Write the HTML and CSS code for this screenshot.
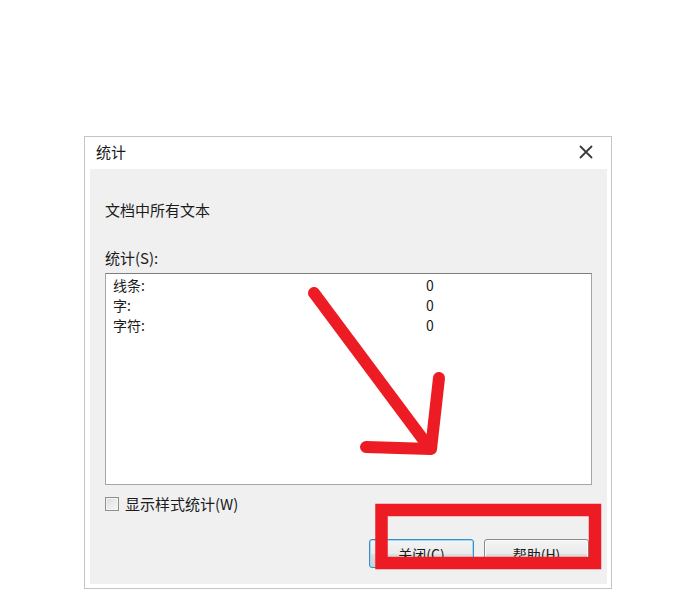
FILE: index.html
```html
<!DOCTYPE html>
<html lang="zh-CN">
<head>
  <meta charset="UTF-8" />
  <title>统计</title>
  <link rel="stylesheet" href="styles.css">
</head>
<body>
  <div class="page">
    <div class="dialog">
      <div class="titlebar">
        <span class="title">统计</span>
        <svg class="close-x" width="16" height="16" viewBox="0 0 16 16">
          <path d="M2 2 L14 14 M14 2 L2 14" stroke="#3a3a3a" stroke-width="1.8" fill="none"/>
        </svg>
      </div>

      <div class="client">
        <div class="scope">文档中所有文本</div>
        <div class="label">统计(S):</div>

        <div class="listbox">
          <div class="row"><span class="name">线条:</span><span class="val">0</span></div>
          <div class="row"><span class="name">字:</span><span class="val">0</span></div>
          <div class="row"><span class="name">字符:</span><span class="val">0</span></div>
        </div>

        <label class="check">
          <span class="box"></span>
          <span>显示样式统计(W)</span>
        </label>

        <div class="buttons">
          <button class="btn btn-default">关闭(C)</button>
          <button class="btn">帮助(H)</button>
        </div>
      </div>
    </div>
  </div>

  <!-- red annotation drawn over the screenshot -->
  <svg class="markup" width="700" height="593" viewBox="0 0 700 593">
    <g stroke="#ed1c24" stroke-width="12" stroke-linecap="round" stroke-linejoin="round" fill="none">
      <path d="M314 293 L428 446"/>
      <path d="M439 378 L431 449 L366 447"/>
    </g>
    <rect x="381.5" y="510" width="213.5" height="53" stroke="#ed1c24" stroke-width="12.5" fill="none"/>
  </svg>
</body>
</html>
```

FILE: styles.css
```css
:root {
  --gray: #f0f0f0;
  --frame: #c4c4c4;
  --text: #1b1b1b;
  --font: "Noto Sans CJK SC", "Noto Sans", sans-serif;
}
* { box-sizing: border-box; margin:0; padding:0 }
html, body {
  width:700px; height:593px; background:#fff; color:var(--text);
  font-family:var(--font); overflow:hidden;
}
.page { padding:136px 0 0 84px }

.dialog {
  width:528px; height:453px;
  border:1px solid var(--frame); background:#fff;
  display:flex; flex-direction:column;
  padding:0 4px 4px 5px;
}
.titlebar {
  height:32px; display:flex; align-items:center; justify-content:space-between;
  padding:0 13px 2px 6px;
}
.title { font-size:15px; line-height:20px }
.close-x { display:block }

.client {
  flex:1; background:var(--gray);
  padding:31px 15px 0 15px;
  display:flex; flex-direction:column;
  font-size:15px; line-height:20px;
}
.scope { height:20px }
.label { margin-top:28px; height:20px }

.listbox {
  margin-top:5px; height:212px;
  background:#fff; border:1px solid #a5a5a5; border-top-color:#7d7d7d;
  padding:1px 0 0 7px;
  font-size:14px;
}
.row { display:flex; height:20px; line-height:20px }
.name { width:313px }

.check {
  margin-top:11px; display:flex; align-items:center; gap:6px; height:16px;
}
.box {
  width:14px; height:14px; border:1px solid #8f8f8f;
  background:linear-gradient(135deg, #dcdcdc, #f8f8f8);
  box-shadow:inset 0 0 0 1px #f4f4f4;
}

.buttons {
  margin-top:27px; display:flex; justify-content:flex-end; gap:10px;
  padding-right:3px;
}
.btn {
  width:105px; height:29px;
  font-family:var(--font); font-size:14px; color:var(--text);
  border:1px solid #8a8a8a; border-radius:3px;
  background:linear-gradient(#f4f4f4 0%, #ebebeb 50%, #dddddd 51%, #cfcfcf 100%);
  box-shadow:inset 0 0 0 1px #fcfcfc;
}
.btn-default {
  border-color:#3c8dc4;
  box-shadow:inset 0 0 0 1px #9bdcf7;
}

.markup { position:absolute; left:0; top:0; pointer-events:none }
```
